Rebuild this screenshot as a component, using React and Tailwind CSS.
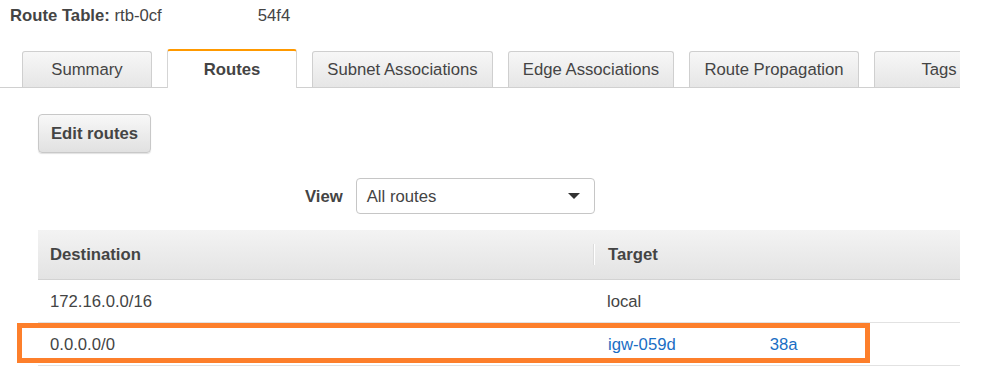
import React from 'react';

const tabs = [
  { label: 'Summary', w: 'w-[130px]' },
  { label: 'Routes', w: 'w-[130px]', active: true },
  { label: 'Subnet Associations', w: 'w-[181px]' },
  { label: 'Edge Associations', w: 'w-[166px]' },
  { label: 'Route Propagation', w: 'w-[170px]' },
  { label: 'Tags', w: 'w-[130px]' },
];

const Tab = ({ label, w, active }) => {
  if (active) {
    return (
      <div className={`${w} shrink-0 h-[39px] -mb-px bg-white border-t-2 border-t-[#ff9900] border-x border-x-[#d5d5d5] rounded-t-[3px] flex items-center justify-center font-bold text-[#444]`}>
        {label}
      </div>
    );
  }
  return (
    <div className={`${w} shrink-0 h-[36px] bg-gradient-to-b from-[#f7f7f7] to-[#e6e6e6] border border-b-0 border-[#cfcfcf] rounded-t-[3px] flex items-center justify-center text-[#444]`}>
      {label}
    </div>
  );
};

export default function App() {
  return (
    <div className="w-[989px] h-[373px] bg-white overflow-hidden text-[16.7px] text-[#444]" style={{ fontFamily: '"Liberation Sans", Arial, sans-serif' }}>
      <div className="w-[960px] overflow-hidden">
        {/* title */}
        <div className="pl-[10px] pt-[6px] h-[32px] leading-[20px] text-[#444]">
          <span className="font-bold">Route Table:</span>{' '}
          <span>rtb-0cf</span>
          <span className="inline-block w-[96px]"></span>
          <span>54f4</span>
        </div>

        {/* tabs */}
        <div className="mt-[18px] h-[38px] flex items-end gap-[15px] pl-[22px] border-b border-[#d0d0d0]">
          {tabs.map((t) => (
            <Tab key={t.label} {...t} />
          ))}
        </div>

        {/* content */}
        <div className="pl-[38px]">
          <button className="mt-[26px] w-[113px] h-[39px] rounded-[4px] border border-[#c8c8c8] bg-gradient-to-b from-[#f8f8f8] to-[#e1e1e1] shadow-[0_1px_1px_rgba(0,0,0,0.12)] font-bold text-[#444]">
            Edit routes
          </button>

          <div className="mt-[25px] flex items-center h-[36px] pl-[267px]">
            <span className="font-bold text-[#444] mr-[13px] pt-[2px]">View</span>
            <div className="w-[239px] h-[36px] border border-[#c6c6c6] rounded-[4px] flex items-center justify-between pl-[10px] pr-[14px] bg-white">
              <span className="pt-[2px]">All routes</span>
              <span className="w-0 h-0 border-x-[6px] border-x-transparent border-t-[6px] border-t-[#333]"></span>
            </div>
          </div>

          {/* table */}
          <div className="mt-[16px]">
            <div className="h-[50px] flex items-center bg-gradient-to-b from-[#f3f3f3] to-[#e3e3e3] border-b border-[#d2d2d2] font-bold text-[#444]">
              <div className="w-[555px] pl-[12px]">Destination</div>
              <div className="w-[2px] h-[21px] bg-white border-l border-[#dcdcdc]"></div>
              <div className="pl-[13px]">Target</div>
            </div>
            <div className="h-[43px] flex items-center border-b border-[#e2e2e2] pt-[2px]">
              <div className="w-[555px] pl-[12px]">172.16.0.0/16</div>
              <div className="pl-[14px]">local</div>
            </div>
            <div className="relative h-[43px] flex items-center border-b border-[#e2e2e2] pt-[2px]">
              <div className="w-[555px] pl-[12px]">0.0.0.0/0</div>
              <div className="pl-[15px] text-[#1a6ec4]">
                <span>igw-059d</span>
                <span className="inline-block w-[94px]"></span>
                <span>38a</span>
              </div>
              <div className="absolute left-[-21px] top-0 w-[853px] h-[40px] border-[5px] border-[#fd7f2b] pointer-events-none"></div>
            </div>
          </div>
        </div>
      </div>
    </div>
  );
}
